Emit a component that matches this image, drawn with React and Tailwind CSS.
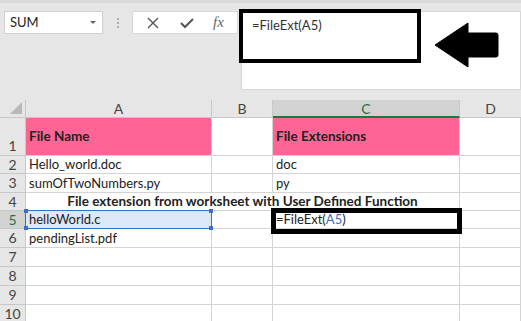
import React from "react";

const font = { fontFamily: "Lato, 'Open Sans', 'Liberation Sans', sans-serif" };

function Cell({ children, className = "" }) {
  return (
    <div className={`border-r border-b border-[#d4d4d4] flex items-end px-[3px] overflow-visible whitespace-nowrap leading-[17px] ${className}`}>
      {children}
    </div>
  );
}

function RowHead({ n, active, tall }) {
  return (
    <div className={`border-r border-b border-[#c8c8c8] flex justify-center text-[14px] leading-[14px] ${tall ? "items-end pb-[2px]" : "items-center"} ${active ? "bg-[#d2d2d2] text-[#217346]" : "bg-[#e6e6e6] text-[#444]"}`}>
      {n}
    </div>
  );
}

export default function App() {
  return (
    <div className="relative w-[521px] h-[321px] overflow-hidden bg-white text-[#222]" style={font}>
      {/* Toolbar */}
      <div className="h-[100px] bg-[#e6e6e6] border-t-[3px] border-[#dadada] flex items-start pt-[8px] pl-[4px]">
        <div className="w-[99px] h-[23px] bg-white border border-[#d0d0d0] flex items-center justify-between pl-[5px] pr-[6px] text-[13px]">
          <span>SUM</span>
          <span className="w-0 h-0 border-l-[3px] border-r-[3px] border-t-[3px] border-l-transparent border-r-transparent border-t-[#666]"></span>
        </div>
        <div className="w-[29px] h-[23px] flex flex-col items-center justify-center gap-[2px]">
          <span className="w-[2px] h-[2px] bg-[#aaa]"></span>
          <span className="w-[2px] h-[2px] bg-[#aaa]"></span>
          <span className="w-[2px] h-[2px] bg-[#aaa]"></span>
        </div>
        <div className="w-[106px] h-[23px] bg-white border border-[#d8d8d8] flex items-center justify-around px-[4px]">
          <svg width="14" height="14" viewBox="0 0 14 14"><path d="M2 2 L12 12 M12 2 L2 12" stroke="#555" strokeWidth="1.4" /></svg>
          <svg width="16" height="14" viewBox="0 0 16 14"><path d="M2 7 L6 11 L14 3" stroke="#555" strokeWidth="2" fill="none" /></svg>
          <span className="italic text-[#666] text-[15px] leading-none" style={{ fontFamily: "'Liberation Serif', serif" }}>fx</span>
        </div>
        <div className="ml-[3px] flex-1 h-[79px] bg-white border border-[#d8d8d8] pl-[10px] pt-[4px] text-[13px] text-[#333]">
          =FileExt(A5)
        </div>
      </div>

      {/* Annotation box around formula */}
      <div className="absolute left-[239px] top-[9px] w-[182px] h-[54px] border-[4px] border-black"></div>
      {/* Arrow */}
      <svg className="absolute left-[434px] top-[22px]" width="66" height="46" viewBox="0 0 66 46">
        <path d="M1 23 L34 1 L34 11 L62 11 Q64 11 64 13 L64 33 Q64 35 62 35 L34 35 L34 45 Z" fill="black" stroke="black" strokeLinejoin="round" strokeWidth="1" />
      </svg>

      {/* Grid */}
      <div className="grid grid-cols-[26px_186px_61px_187px_1fr] grid-rows-[18px_38px_18px_19px_18px_18px_19px_19px_19px_19px_19px] text-[13px]">
        {/* header row */}
        <div className="bg-[#e6e6e6] border-r border-b border-[#c8c8c8] relative">
          <svg className="absolute right-[3px] bottom-[3px]" width="12" height="12"><path d="M12 0 L12 12 L0 12 Z" fill="#b8b8b8" /></svg>
        </div>
        <div className="bg-[#e6e6e6] border-r border-b border-[#c8c8c8] flex items-center justify-center text-[#444] text-[14px]">A</div>
        <div className="bg-[#e6e6e6] border-r border-b border-[#c8c8c8] flex items-center justify-center text-[#444] text-[14px]">B</div>
        <div className="bg-[#d2d2d2] border-r border-b-2 border-r-[#c8c8c8] border-b-[#217346] flex items-center justify-center text-[#217346] text-[14px]">C</div>
        <div className="bg-[#e6e6e6] border-b border-[#c8c8c8] flex items-center justify-center text-[#444] text-[14px]">D</div>

        {/* row 1 */}
        <RowHead n="1" tall />
        <Cell className="bg-[#fe6595] font-bold !items-center text-[13.5px]">File Name</Cell>
        <Cell />
        <Cell className="bg-[#fe6595] font-bold !items-center text-[13.5px]">File Extensions</Cell>
        <Cell />

        {/* row 2 */}
        <RowHead n="2" />
        <Cell>Hello_world.doc</Cell>
        <Cell />
        <Cell>doc</Cell>
        <Cell />

        {/* row 3 */}
        <RowHead n="3" />
        <Cell>sumOfTwoNumbers.py</Cell>
        <Cell />
        <Cell>py</Cell>
        <Cell />

        {/* row 4 merged A:C */}
        <RowHead n="4" />
        <div className="col-span-3 border-r border-b border-[#d4d4d4] flex items-end justify-center font-bold whitespace-nowrap leading-[17px] text-[13.5px]">
          File extension from worksheet with User Defined Function
        </div>
        <Cell />

        {/* row 5 */}
        <RowHead n="5" active />
        <div className="relative border-r border-b border-[#d4d4d4] bg-[#dde8f6] flex items-end px-[3px] leading-[17px]">
          <div className="absolute -left-px -top-px -right-px -bottom-px border border-[#3b6fc7]"></div>
          <span className="absolute -left-[2px] -top-[2px] w-[4px] h-[4px] bg-[#3b6fc7]"></span>
          <span className="absolute -right-[2px] -top-[2px] w-[4px] h-[4px] bg-[#3b6fc7]"></span>
          <span className="absolute -left-[2px] -bottom-[2px] w-[4px] h-[4px] bg-[#3b6fc7]"></span>
          <span className="absolute -right-[2px] -bottom-[2px] w-[4px] h-[4px] bg-[#3b6fc7]"></span>
          <span className="relative">helloWorld.c</span>
        </div>
        <Cell />
        <Cell className="relative">
          <span>=FileExt(<span className="text-[#3b6fc7]">A5</span>)</span>
          <div className="absolute left-[-2px] top-[-3px] w-[191px] h-[26px] border-[5px] border-black"></div>
        </Cell>
        <Cell />

        {/* row 6 */}
        <RowHead n="6" />
        <Cell>pendingList.pdf</Cell>
        <Cell />
        <Cell />
        <Cell />

        {[7, 8, 9, 10].map((n) => (
          <React.Fragment key={n}>
            <RowHead n={String(n)} />
            <Cell />
            <Cell />
            <Cell />
            <Cell />
          </React.Fragment>
        ))}
      </div>
    </div>
  );
}
